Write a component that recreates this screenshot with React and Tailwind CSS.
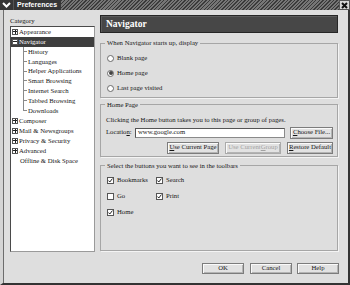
import React from "react";

const tree = [
  { label: "Appearance", kind: "closed" },
  { label: "Navigator", kind: "open", selected: true },
  { label: "History", kind: "child" },
  { label: "Languages", kind: "child" },
  { label: "Helper Applications", kind: "child" },
  { label: "Smart Browsing", kind: "child" },
  { label: "Internet Search", kind: "child" },
  { label: "Tabbed Browsing", kind: "child" },
  { label: "Downloads", kind: "child", last: true },
  { label: "Composer", kind: "closed" },
  { label: "Mail & Newsgroups", kind: "closed" },
  { label: "Privacy & Security", kind: "closed" },
  { label: "Advanced", kind: "closed" },
  { label: "Offline & Disk Space", kind: "leaf" },
];

function Expander({ open }) {
  return (
    <span className="ml-[1px] w-[6px] h-[6px] border border-[#555] bg-white flex items-center justify-center relative">
      <span className="absolute w-[4px] h-[1px] bg-[#222]" />
      {!open && <span className="absolute w-[1px] h-[4px] bg-[#222]" />}
    </span>
  );
}

function TreeRow({ item }) {
  const base = "h-[9.9px] flex items-center whitespace-nowrap";
  if (item.kind === "child") {
    return (
      <div className={base}>
        <span className="ml-[12px] w-[4px] h-full flex flex-col">
          <span className="h-1/2 border-l border-b border-[#8a8a8a]" />
          <span className={item.last ? "h-1/2" : "h-1/2 border-l border-[#8a8a8a]"} />
        </span>
        <span className="ml-[1px]">{item.label}</span>
      </div>
    );
  }
  return (
    <div className={`${base} ${item.selected ? "bg-[#3e3e3e] text-white" : ""}`}>
      {item.kind === "leaf" ? <span className="w-[7px] ml-[1px]" /> : <Expander open={item.kind === "open"} />}
      <span className="ml-[1px]">{item.label}</span>
    </div>
  );
}

function Btn({ children, w, disabled }) {
  return (
    <div
      className={`${w} h-full flex items-center justify-center border border-[#7c7c7c] bg-[#e2e2e2] shadow-[inset_1px_1px_0_#fafafa,inset_-1px_-1px_0_#b4b4b4] whitespace-nowrap ${
        disabled ? "text-[#a2a2a2] border-[#aaa]" : ""
      }`}
    >
      {children}
    </div>
  );
}

function Radio({ checked, label }) {
  return (
    <div className="h-[15px] flex items-center">
      <span className="w-[7px] h-[7px] rounded-full border border-[#6a6a6a] bg-white flex items-center justify-center">
        {checked && <span className="w-[4px] h-[4px] rounded-full bg-[#444]" />}
      </span>
      <span className="ml-[3px]">{label}</span>
    </div>
  );
}

function Check({ checked, label, w }) {
  return (
    <div className={`${w} flex items-center`}>
      <span className="w-[7px] h-[7px] border border-[#555] bg-white flex items-center justify-center">
        {checked && (
          <svg width="5" height="5" viewBox="0 0 5 5">
            <polyline points="0.6,2.6 1.8,4 4.4,0.6" fill="none" stroke="#222" strokeWidth="1" />
          </svg>
        )}
      </span>
      <span className="ml-[3px]">{label}</span>
    </div>
  );
}

function Group({ legend, h, className = "", children }) {
  return (
    <fieldset className={`${h} border border-[#a6a6a6] shadow-[1px_1px_0_#f4f4f4] ${className}`}>
      <legend className="ml-[4px] px-[2px] leading-[8px]">{legend}</legend>
      {children}
    </fieldset>
  );
}

export default function App() {
  return (
    <div className="w-[350px] h-[285px] flex flex-col bg-[#dedede] overflow-hidden font-['Liberation_Serif','Times_New_Roman',serif] text-[6.7px] text-[#161616]">
      {/* title bar */}
      <div className="h-[10px] flex bg-[#363636]">
        <div className="w-[13px] flex items-center justify-center">
          <svg width="9" height="6" viewBox="0 0 9 6">
            <polyline points="1,1 4.5,4.5 8,1" fill="none" stroke="#fff" strokeWidth="2" />
          </svg>
        </div>
        <div className="pl-[3px] pr-[4px] flex items-center text-white font-bold text-[7px] font-['Liberation_Sans',Arial,sans-serif] border-l border-[#555]">
          Preferences
        </div>
        <div className="flex-1 bg-[repeating-linear-gradient(135deg,#3a3a3a_0px,#3a3a3a_1px,#767676_1px,#767676_2.5px)]" />
        <div className="w-[11px] flex items-center justify-center bg-[#d6d6d6] border border-[#555]">
          <svg width="7" height="7" viewBox="0 0 7 7">
            <path d="M1 1L6 6M6 1L1 6" stroke="#111" strokeWidth="2" />
          </svg>
        </div>
      </div>

      {/* body */}
      <div className="flex-1 flex flex-col border-l-[3px] border-l-[#d4d4d4] border-r-2 border-r-[#333] border-b-2 border-b-[#333] shadow-[inset_1px_0_0_#6c6c6c]">
        <div className="flex pt-[5px] pl-[7px]">
          {/* category tree */}
          <div className="w-[85px] flex flex-col">
            <div className="h-[11px] leading-[11px]">Category</div>
            <div className="h-[226px] bg-white border border-[#9a9a9a] border-l-[#4a4a4a] border-t-[#4a4a4a]">
              {tree.map((item) => (
                <TreeRow key={item.label} item={item} />
              ))}
            </div>
          </div>

          {/* right panel */}
          <div className="ml-[5px] w-[238px] flex flex-col">
            <div className="h-[18px] bg-[#474747] border border-[#262626] shadow-[inset_1px_1px_0_#5c5c5c] flex items-center pl-[5px] text-white font-bold text-[9.5px]">
              Navigator
            </div>

            <Group legend="When Navigator starts up, display" h="h-[58.5px]" className="mt-[6px]">
              <div className="pt-[3.5px] pl-[6px]">
                <Radio label="Blank page" />
                <Radio label="Home page" checked />
                <Radio label="Last page visited" />
              </div>
            </Group>

            <Group legend="Home Page" h="h-[56px]" className="mt-[3px]">
              <div className="pt-[7px] pl-[5px] pr-[4px]">
                <div className="h-[8px] leading-[8px] whitespace-nowrap">
                  Clicking the Home button takes you to this page or group of pages.
                </div>
                <div className="mt-[3px] h-[12px] flex items-center">
                  <span className="w-[29px]">
                    Locatio<span className="underline">n</span>:
                  </span>
                  <div className="w-[150px] h-[10px] bg-white border border-[#8a8a8a] border-t-[#555] border-l-[#555] pl-[2px] flex items-center">
                    www.google.com
                  </div>
                  <div className="ml-[5px] h-full">
                    <Btn w="w-[43px]">
                      <span className="underline">C</span>hoose File...
                    </Btn>
                  </div>
                </div>
                <div className="mt-[3px] h-[12px] flex justify-end gap-[6px]">
                  <Btn w="w-[52px]">
                    <span className="underline">U</span>se Current Page
                  </Btn>
                  <Btn w="w-[56px]" disabled>
                    Use Current <span className="underline">G</span>roup
                  </Btn>
                  <Btn w="w-[46px]">
                    <span className="underline">R</span>estore Default
                  </Btn>
                </div>
              </div>
            </Group>

            <Group legend="Select the buttons you want to see in the toolbars" h="h-[89px]" className="mt-[5px]">
              <div className="pt-[3px] pl-[6px]">
                <div className="h-[16px] flex items-center">
                  <Check w="w-[49px]" label="Bookmarks" checked />
                  <Check label="Search" checked />
                </div>
                <div className="h-[16px] flex items-center">
                  <Check w="w-[49px]" label="Go" />
                  <Check label="Print" checked />
                </div>
                <div className="h-[16px] flex items-center">
                  <Check w="w-[49px]" label="Home" checked />
                </div>
              </div>
            </Group>
          </div>
        </div>

        {/* dialog buttons */}
        <div className="mt-auto mb-[9px] pr-[9px] h-[11px] flex justify-end">
          <Btn w="w-[42px]">OK</Btn>
          <div className="ml-[6px] h-full">
            <Btn w="w-[42px]">Cancel</Btn>
          </div>
          <div className="ml-[5px] h-full">
            <Btn w="w-[42px]">Help</Btn>
          </div>
        </div>
      </div>
    </div>
  );
}
